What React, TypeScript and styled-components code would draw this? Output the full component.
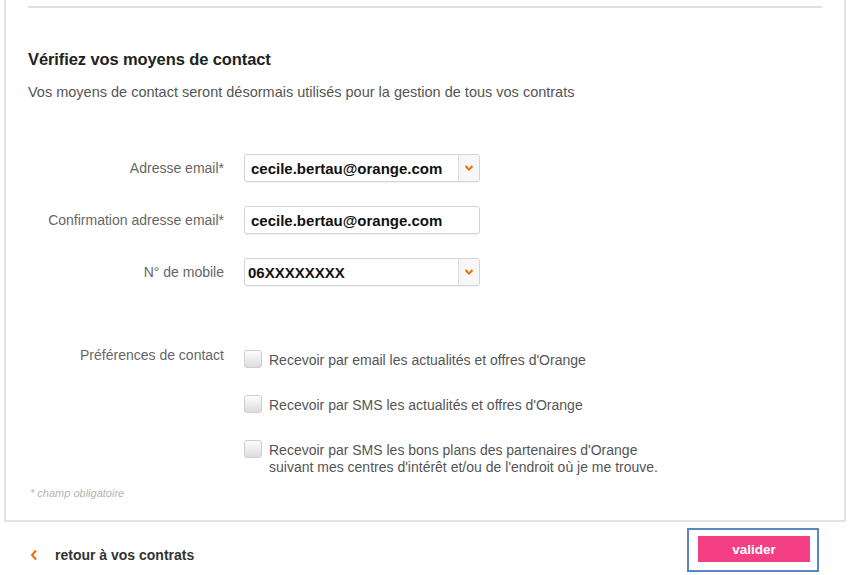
import React from 'react';
import styled, { createGlobalStyle } from 'styled-components';

const Global = createGlobalStyle`
    html, body {
        margin: 0;
        padding: 0;
        background: #fff;
        font-family: "Liberation Sans", Arial, sans-serif;
    }
`

const Page = styled.div`
    width: 852px;
    height: 575px;
    overflow: hidden;
    box-sizing: border-box;
    padding-left: 4px;
`

const Panel = styled.section`
    width: 842px;
    height: 522px;
    box-sizing: border-box;
    border: 2px solid #e2e2e2;
    border-top: none;
    padding: 6px 22px 0 22px;
`

const Rule = styled.hr`
    margin: 0;
    border: none;
    height: 2px;
    background: #e0e0e0;
`

const Title = styled.h2`
    margin: 42px 0 0;
    font-size: 16.5px;
    line-height: 19px;
    font-weight: bold;
    color: #222;
    letter-spacing: -0.1px;
`

const Intro = styled.p`
    margin: 15px 0 0;
    font-size: 14.5px;
    line-height: 17px;
    color: #555;
`

const Form = styled.div`
    display: grid;
    grid-template-columns: 196px 1fr;
    column-gap: 20px;
    row-gap: 24px;
    margin-top: 53px;
    align-items: center;
`

const Label = styled.label<{ $top?: boolean }>`
    text-align: right;
    font-size: 14px;
    color: #666;
    align-self: ${p => (p.$top ? 'start' : 'center')};
    margin-top: ${p => (p.$top ? '37px' : '0')};
    line-height: 17px;
`

const Field = styled.div`
    width: 236px;
    height: 28px;
    box-sizing: border-box;
    border: 1px solid #d4d4d4;
    border-radius: 3px;
    display: flex;
    align-items: center;
    background: #fff;
    box-shadow: 0 1px 1px rgba(0, 0, 0, 0.05);
`

const Value = styled.span<{ $pad?: number }>`
    flex: 1;
    padding-left: ${p => p.$pad ?? 6}px;
    font-size: 15px;
    font-weight: bold;
    color: #111;
`

const Drop = styled.span`
    width: 20px;
    height: 26px;
    border-left: 1px solid #ddd;
    background: #f7f7f7;
    display: flex;
    align-items: center;
    justify-content: center;
    border-radius: 0 3px 3px 0;
`

const Options = styled.div`
    display: flex;
    flex-direction: column;
    gap: 26px;
    padding-top: 3px;
    margin-top: 37px;
`

const Option = styled.div`
    display: flex;
    gap: 7px;
    align-items: flex-start;
`

const Box = styled.span`
    width: 18px;
    height: 18px;
    box-sizing: border-box;
    flex: none;
    border: 1px solid #cfcfcf;
    border-radius: 3px;
    background: linear-gradient(#fdfdfd, #dcdcdc);
`

const OptionText = styled.span`
    font-size: 14px;
    line-height: 17px;
    color: #555;
    padding-top: 2px;
`

const Note = styled.p`
    margin: 11px 0 0 2px;
    font-size: 11px;
    font-style: italic;
    color: #b5b5b5;
`

const Footer = styled.div`
    display: flex;
    align-items: center;
    justify-content: space-between;
    padding: 6px 33px 0 26px;
`

const Back = styled.a`
    display: flex;
    align-items: center;
    gap: 17px;
    font-size: 14px;
    font-weight: bold;
    color: #333;
    text-decoration: none;
    padding-top: 10px;
`

const Frame = styled.div`
    width: 132px;
    height: 44px;
    box-sizing: border-box;
    border: 2px solid #5b86c4;
    padding: 6px 9px;
`

const Button = styled.button`
    width: 112px;
    height: 26px;
    border: none;
    background: #f43f85;
    color: #fff;
    font-family: inherit;
    font-size: 13.5px;
    font-weight: bold;
    padding: 0;
`

const Chevron = () => (
    <svg width={12} height={12} viewBox="0 0 12 12">
        <path d="M2.5 4 L6 7.5 L9.5 4" fill="none" stroke="#f16e00" strokeWidth={2} />
    </svg>
)

const options = [
    ["Recevoir par email les actualités et offres d'Orange"],
    ["Recevoir par SMS les actualités et offres d'Orange"],
    ["Recevoir par SMS les bons plans des partenaires d'Orange", "suivant mes centres d'intérêt et/ou de l'endroit où je me trouve."],
]

export default function App() {
    return (
        <Page>
            <Global />
            <Panel>
                <Rule />
                <Title>Vérifiez vos moyens de contact</Title>
                <Intro>Vos moyens de contact seront désormais utilisés pour la gestion de tous vos contrats</Intro>
                <Form>
                    <Label>Adresse email*</Label>
                    <Field>
                        <Value>cecile.bertau@orange.com</Value>
                        <Drop><Chevron /></Drop>
                    </Field>
                    <Label>Confirmation adresse email*</Label>
                    <Field>
                        <Value>cecile.bertau@orange.com</Value>
                    </Field>
                    <Label>N° de mobile</Label>
                    <Field>
                        <Value $pad={3}>06XXXXXXXX</Value>
                        <Drop><Chevron /></Drop>
                    </Field>
                    <Label $top>Préférences de contact</Label>
                    <Options>
                        {options.map((lines, i) => (
                            <Option key={i}>
                                <Box />
                                <OptionText>
                                    {lines.map((l, j) => (
                                        <React.Fragment key={j}>{j > 0 && <br />}{l}</React.Fragment>
                                    ))}
                                </OptionText>
                            </Option>
                        ))}
                    </Options>
                </Form>
                <Note>* champ obligatoire</Note>
            </Panel>
            <Footer>
                <Back href="#">
                    <svg width="8" height="12" viewBox="0 0 8 12">
                        <path d="M6 1.5 L2 6 L6 10.5" fill="none" stroke="#f16e00" strokeWidth="2" />
                    </svg>
                    retour à vos contrats
                </Back>
                <Frame>
                    <Button>valider</Button>
                </Frame>
            </Footer>
        </Page>
    )
}
